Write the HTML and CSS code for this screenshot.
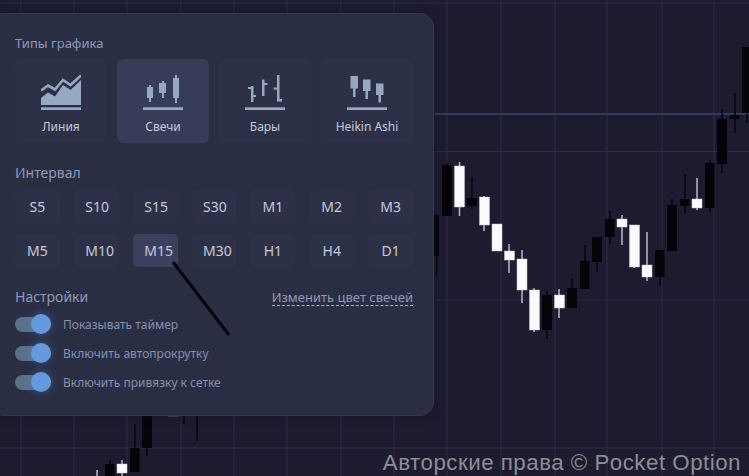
FILE: index.html
```html
<!DOCTYPE html>
<html lang="ru">
<head>
<meta charset="utf-8">
<title>Настройки графика</title>
<link rel="stylesheet" href="styles.css">
</head>
<body>
<main class="stage">
  <svg class="chart" viewBox="0 0 749 476" width="749" height="476" aria-hidden="true">
    <g class="grid">
      <path d="M21 0V476M74 0V476M127 0V476M181 0V476M234 0V476M287 0V476M341 0V476M394 0V476M447 0V476M501 0V476M555 0V476M607 0V476M662 0V476M714 0V476"/>
      <path d="M0 3H749M0 151.500H749M0 300H749M0 448H749"/>
    </g>
    <path class="level" d="M0 114H749"/>
    <g class="wick-d">
      <path d="M436.500 256V276M447 163V166M472 177V209M547 291V339M572 278V288M585 245V261M597 262V272M610 211V244M660 277V286M672 199V205M685 174V214M710 160V212M722 109V173M735 93V133M747 113V123M110 460V476M135 424V472M147 440V456M184 415V424M197 415V441"/>
    </g>
    <g class="wick-l">
      <path d="M459.500 162V216M484 196V231M509 244V273M522 250V303M534 288V332M559 289V318M622 215V245M634 225V268M647 232V281M697 178V210M97 470V476M122 460V476"/>
    </g>
    <g class="body-d">
      <rect x="427" y="215" width="12" height="41"/>
      <rect x="442" y="165" width="10" height="51"/>
      <rect x="467" y="198" width="10" height="8"/>
      <rect x="542" y="295" width="10" height="35"/>
      <rect x="567" y="288" width="10" height="20"/>
      <rect x="580" y="261" width="9.500" height="28"/>
      <rect x="592" y="237" width="10" height="25"/>
      <rect x="605" y="219" width="9.500" height="18"/>
      <rect x="655" y="250" width="9.500" height="27"/>
      <rect x="667" y="205" width="10" height="46"/>
      <rect x="680" y="199" width="9.500" height="7"/>
      <rect x="705" y="163" width="9.500" height="45"/>
      <rect x="717" y="119" width="10" height="45"/>
      <rect x="730" y="115" width="9.500" height="4"/>
      <rect x="742" y="47" width="7" height="66"/>
      <rect x="105" y="464" width="9.500" height="12"/>
      <rect x="130" y="448" width="9.500" height="24"/>
      <rect x="142" y="410" width="10" height="38"/>
      <rect x="178" y="414" width="12" height="2"/>
    </g>
    <g class="body-l">
      <rect x="454.500" y="166" width="10" height="41"/>
      <rect x="479.500" y="197" width="10" height="28"/>
      <rect x="492" y="224" width="10" height="27"/>
      <rect x="504.500" y="251" width="10" height="9"/>
      <rect x="517" y="259" width="10" height="31"/>
      <rect x="529.500" y="290" width="10" height="40"/>
      <rect x="554.500" y="295" width="10" height="13"/>
      <rect x="617" y="219" width="10" height="8"/>
      <rect x="629.500" y="225" width="10" height="42"/>
      <rect x="642" y="265" width="10" height="12"/>
      <rect x="692" y="199" width="10" height="9"/>
      <rect x="117" y="464" width="10" height="9"/>
      <rect x="168" y="412" width="10" height="4"/>
    </g>
  </svg>

  <section class="panel">
    <h2 class="heading heading-types">Типы графика</h2>
    <div class="types">
      <button class="type">
        <svg class="type-icon" viewBox="0 0 40 36" aria-hidden="true">
          <path class="ico-fill" d="M0 24L7 18.500L14 22.500L22 11L29.500 16L40 6V31H0Z"/>
          <path class="ico-stroke" d="M0 16.500L7 11.500L14 15.500L22 6L29.500 11L40 1.500"/>
          <rect class="ico-fill" x="0" y="33.300" width="40" height="2.700"/>
        </svg>
        <span>Линия</span>
      </button>
      <button class="type is-active">
        <svg class="type-icon" viewBox="0 0 40 36" aria-hidden="true">
          <path class="ico-fill" d="M6 11H8V13H10V24H8V28H6V24H4V13H6ZM19 7H21V9H23V19H21V24H19V19H16V9H19ZM32 1H34V4H36V24H34V29H32V24H30V4H32Z"/>
          <rect class="ico-fill" x="0" y="33.300" width="40" height="2.700"/>
        </svg>
        <span>Свечи</span>
      </button>
      <button class="type">
        <svg class="type-icon" viewBox="0 0 40 36" aria-hidden="true">
          <path class="ico-fill" d="M6 12H8.500V21H11V23H8.500V28H6V15H3V13H6ZM17 5.500H19.500V9H22.500V11H19.500V22H17ZM32 1H34.500V25H37V27.500H32V15.500H28.500V13.500H32Z"/>
          <rect class="ico-fill" x="0" y="33.300" width="40" height="2.700"/>
        </svg>
        <span>Бары</span>
      </button>
      <button class="type">
        <svg class="type-icon" viewBox="0 0 40 36" aria-hidden="true">
          <path class="ico-fill" d="M3.500 2H11V14.500H8.500V23H6V14.500H3.500ZM16 5.500H23.500V17H21V25H18.500V17H16ZM29 9.500H36.500V21H34V28.500H31.500V21H29Z"/>
          <rect class="ico-fill" x="0" y="33.300" width="40" height="2.700"/>
        </svg>
        <span>Heikin Ashi</span>
      </button>
    </div>

    <h2 class="heading heading-interval">Интервал</h2>
    <div class="intervals">
      <button class="interval">S5</button>
      <button class="interval is-left">S10</button>
      <button class="interval is-left">S15</button>
      <button class="interval is-left">S30</button>
      <button class="interval">M1</button>
      <button class="interval">M2</button>
      <button class="interval">M3</button>
      <button class="interval">M5</button>
      <button class="interval is-left">M10</button>
      <button class="interval is-left is-active">M15</button>
      <button class="interval is-left">M30</button>
      <button class="interval">H1</button>
      <button class="interval">H4</button>
      <button class="interval">D1</button>
    </div>

    <div class="settings-head">
      <h2 class="heading">Настройки</h2>
      <a class="change-color">Изменить цвет свечей</a>
    </div>
    <ul class="settings">
      <li class="setting"><span class="toggle"></span>Показывать таймер</li>
      <li class="setting"><span class="toggle"></span>Включить автопрокрутку</li>
      <li class="setting"><span class="toggle"></span>Включить привязку к сетке</li>
    </ul>
  </section>

  <svg class="stroke" viewBox="0 0 749 476" width="749" height="476" aria-hidden="true">
    <path d="M173 262L229 335"/>
  </svg>

  <p class="copyright">Авторские права © Pocket Option</p>
</main>
</body>
</html>
```

FILE: styles.css
```css
* { box-sizing: border-box; }

html, body {
  margin: 0;
  padding: 0;
  background: #1c1b30;
}

.stage {
  position: relative;
  width: 749px;
  height: 476px;
  overflow: hidden;
  background: #1c1b30;
  font-family: "Noto Sans", "Open Sans", sans-serif;
}

.chart, .stroke {
  position: absolute;
  left: 0;
  top: 0;
}

.grid path { stroke: #2d2d45; stroke-width: 1; fill: none; }
.level { stroke: #323c5e; stroke-width: 2; fill: none; }
.wick-d path { stroke: #05050c; stroke-width: 1.500; fill: none; }
.wick-l path { stroke: #b9b9c4; stroke-width: 1.500; fill: none; }
.body-d rect { fill: #030308; }
.body-l rect { fill: #fbfbfd; stroke: #c9c9d2; stroke-width: .5; }

.panel {
  position: absolute;
  left: -10px;
  top: 13px;
  width: 444px;
  height: 403px;
  padding: 20px 20px 0 24px;
  background: #2a2e43;
  border: 1px solid #34384f;
  border-radius: 14px;
  box-shadow: 0 0 8px rgba(20, 20, 38, .5);
}

.heading {
  margin: 0;
  font-size: 14px;
  line-height: 18px;
  font-weight: 400;
  color: #8e9abb;
}

.heading-types { font-size: 13px; }

.types {
  display: grid;
  grid-template-columns: repeat(4, 92px);
  gap: 10px;
  margin-top: 7px;
}

.type {
  display: flex;
  flex-direction: column;
  align-items: center;
  height: 84px;
  padding: 15px 0 0;
  background: #2c3147;
  border: 0;
  border-radius: 6px;
  font: inherit;
  font-size: 12px;
  line-height: 16px;
  color: #c6cad9;
}

.type.is-active { background: #373c59; }
.type-icon { display: block; width: 40px; height: 36px; margin-bottom: 9px; }
.ico-fill { fill: #97a8c3; }
.ico-stroke { fill: none; stroke: #97a8c3; stroke-width: 2.600; }

.heading-interval { margin-top: 21px; }

.intervals {
  display: grid;
  grid-template-columns: repeat(7, 1fr);
  grid-auto-rows: 33.500px;
  gap: 10px 14px;
  margin-top: 8px;
}

.interval {
  padding: 0;
  background: #2c3147;
  border: 0;
  border-radius: 5px;
  font: inherit;
  font-size: 14px;
  color: #c6cad9;
}

.interval.is-left {
  padding-left: 11.500px;
  text-align: left;
}

.interval.is-active { background: #3a405d; }

.settings-head {
  display: flex;
  justify-content: space-between;
  align-items: center;
  margin-top: 21px;
}

.change-color {
  font-size: 13px;
  line-height: 16px;
  color: #8e9abb;
  border-bottom: 1px dashed #a8b3cf;
}

.settings {
  display: flex;
  flex-direction: column;
  gap: 9px;
  margin: 8px 0 0;
  padding: 0;
  list-style: none;
}

.setting {
  display: flex;
  align-items: center;
  gap: 12px;
  height: 20px;
  font-size: 12px;
  color: #8591b1;
}

.toggle {
  position: relative;
  width: 36px;
  height: 15px;
  background: #5b7189;
  border-radius: 8px;
  flex: none;
}

.toggle::after {
  content: "";
  position: absolute;
  right: 0;
  top: -2.500px;
  width: 20px;
  height: 20px;
  border-radius: 50%;
  background: #649bde;
  box-shadow: 0 0 10px rgba(80, 140, 220, .45);
}

.stroke path { stroke: #05050d; stroke-width: 3; fill: none; }

.copyright {
  position: absolute;
  right: 8px;
  bottom: 0;
  margin: 0;
  font-family: "Liberation Sans", Arial, sans-serif;
  font-size: 22.300px;
  letter-spacing: .5px;
  line-height: 26px;
  color: #8d8d96;
}
```
